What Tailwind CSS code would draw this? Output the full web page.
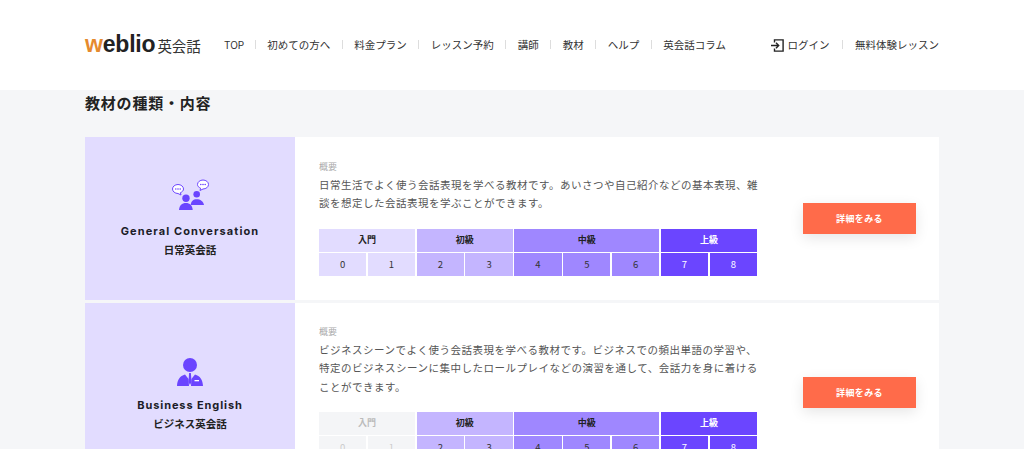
<!DOCTYPE html>
<html lang="ja">
<head>
    <meta charset="UTF-8">
    <meta name="viewport" content="width=device-width, initial-scale=1.0">
    <title>教材の種類・内容 | Weblio英会話</title>
    <script src="https://cdn.jsdelivr.net/npm/@tailwindcss/browser@4"></script>
</head>
<body class="bg-[#f5f6f8] h-[449px] overflow-hidden font-['Noto_Sans_CJK_JP','Noto_Sans',sans-serif] text-[#222]">

<!-- ヘッダー -->
<header class="bg-white h-[90px] px-[85px] flex items-center justify-between">
    <div class="flex items-center">
        <a class="flex items-baseline w-[139px] -mt-[2px]">
            <span class="font-['Liberation_Sans',sans-serif] font-bold text-[23px] leading-none tracking-[-0.2px] text-[#222]"><span class="text-[#e58a2e]">w</span>eblio</span>
            <span class="ml-[2px] text-[14.5px] leading-none text-[#333]">英会話</span>
        </a>
        <nav class="flex items-center text-[10.5px] text-[#333] -mt-[1px]">
            <a class="pr-[10.5px] font-['Inter',sans-serif] text-[10px] leading-[9px] pt-[1px]">TOP</a>
            <a class="px-[11.5px] border-l border-[#ddd] leading-[9px]">初めての方へ</a>
            <a class="px-[11.5px] border-l border-[#ddd] leading-[9px]">料金プラン</a>
            <a class="px-[11.5px] border-l border-[#ddd] leading-[9px]">レッスン予約</a>
            <a class="px-[11.5px] border-l border-[#ddd] leading-[9px]">講師</a>
            <a class="px-[11.5px] border-l border-[#ddd] leading-[9px]">教材</a>
            <a class="px-[11.5px] border-l border-[#ddd] leading-[9px]">ヘルプ</a>
            <a class="pl-[11.5px] border-l border-[#ddd] leading-[9px]">英会話コラム</a>
        </nav>
    </div>
    <div class="flex items-center text-[10.5px] text-[#333]">
        <svg class="w-[13px] h-[13px] mr-[4px]" viewBox="0 0 13 13" fill="none" stroke="#222" stroke-width="1.4">
            <path d="M3.5 3.5V.9h8.6v11.2H3.5V9.5"/>
            <path d="M0 6.5h7.5M5 3.8l2.7 2.7L5 9.2"/>
        </svg>
        <a class="pr-[12px]">ログイン</a>
        <a class="pl-[12.5px] border-l border-[#ddd] leading-[9px] -mt-[1px]">無料体験レッスン</a>
    </div>
</header>

<main class="px-[85px]">
    <h2 class="text-[15px] font-bold leading-[20px] mt-[3px] mb-[24px] tracking-[0.8px]">教材の種類・内容</h2>

    <!-- 日常英会話 -->
    <section class="flex bg-white h-[163px] mb-[3px]">
        <div class="w-[210px] shrink-0 bg-[#e2dcff] flex flex-col items-center pt-[42px]">
            <svg class="w-[38px] h-[32px]" viewBox="0 0 38 32" fill="#6b45ff">
                <path d="M7 5.500c-3 0-5.500 2-5.500 4.500s2.500 4.500 5.500 4.500l3 1.500-.6-2.300c1.900-.8 3.100-2.100 3.100-3.700 0-2.500-2.500-4.500-5.500-4.500z" fill="#fff" stroke="#6b45ff" stroke-width="1"/>
                <path d="M32 1c-3 0-5.500 2-5.500 4.500 0 1.600 1.200 2.900 3.100 3.700L29 11.500l3-1.500c3 0 5.500-2 5.500-4.500S35 1 32 1z" fill="#fff" stroke="#6b45ff" stroke-width="1"/>
                <circle cx="4.800" cy="10" r=".8"/><circle cx="7" cy="10" r=".8"/><circle cx="9.200" cy="10" r=".8"/>
                <circle cx="29.800" cy="5.500" r=".8"/><circle cx="32" cy="5.500" r=".8"/><circle cx="34.200" cy="5.500" r=".8"/>
                <circle cx="25.700" cy="15.300" r="3.300"/>
                <path d="M19.700 26c.3-3.800 2.600-5.800 6-5.800s6.700 2 7.300 5.800z"/>
                <circle cx="15" cy="19.300" r="3.700"/>
                <path d="M8 31c.3-4.500 3-7 6.900-7s6.500 2.500 6.800 7z"/>
            </svg>
            <p class="mt-[13px] font-['Inter',sans-serif] font-bold text-[11px] leading-[14px] tracking-[1.1px] text-[#1c1c28]">General Conversation</p>
            <p class="mt-[5px] text-[10.5px] font-bold leading-[14px]">日常英会話</p>
        </div>
        <div class="w-[462px] pl-[24px] pt-[24px]">
            <p class="text-[9px] leading-[12px] text-[#aaa]">概要</p>
            <p class="text-[10.5px] leading-[18px] tracking-[0.5px] text-[#555] mt-[3px] w-[440px]">日常生活でよく使う会話表現を学べる教材です。あいさつや自己紹介などの基本表現、雑談を想定した会話表現を学ぶことができます。</p>
            <div class="grid grid-cols-9 gap-[1.5px] w-[438px] mt-[17px] text-[9.5px] text-center leading-[22.500px] text-[#333]">
                <div class="col-span-2 bg-[#e2dcff] font-bold text-[9px] text-[#222]">入門</div>
                <div class="col-span-2 bg-[#c4b5ff] font-bold text-[9px] text-[#222]">初級</div>
                <div class="col-span-3 bg-[#9f87ff] font-bold text-[9px] text-[#222]">中級</div>
                <div class="col-span-2 bg-[#6b45ff] font-bold text-[9px] text-white">上級</div>
                <div class="bg-[#e2dcff]">0</div>
                <div class="bg-[#e2dcff]">1</div>
                <div class="bg-[#c4b5ff]">2</div>
                <div class="bg-[#c4b5ff]">3</div>
                <div class="bg-[#9f87ff]">4</div>
                <div class="bg-[#9f87ff]">5</div>
                <div class="bg-[#9f87ff]">6</div>
                <div class="bg-[#6b45ff] text-white">7</div>
                <div class="bg-[#6b45ff] text-white">8</div>
            </div>
        </div>
        <div class="flex-1 flex items-start pt-[66px] pl-[46px]">
            <a class="block w-[113px] h-[31px] bg-[#ff6b4a] text-white text-[9px] tracking-[0.4px] font-bold leading-[31px] text-center shadow-[0_4px_14px_rgba(0,0,0,0.1)]">詳細をみる</a>
        </div>
    </section>

    <!-- ビジネス英会話 -->
    <section class="flex bg-white h-[200px]">
        <div class="w-[210px] shrink-0 bg-[#e2dcff] flex flex-col items-center pt-[55px]">
            <svg class="w-[28px] h-[28px]" viewBox="0 0 28 28" fill="#6b45ff">
                <circle cx="14" cy="7" r="7"/>
                <path d="M1 28c.3-6.500 3-10 8-11.500l3.600 4.500.4 7zM27 28c-.3-6.500-3-10-8-11.500L15.400 21l-.4 7z"/>
                <path d="M13.100 15h1.800l.6 9-1.500 3-1.500-3z"/>
                <rect x="18.500" y="22" width="4.500" height="1.300" fill="#fff"/>
            </svg>
            <p class="mt-[12px] font-['Inter',sans-serif] font-bold text-[11px] leading-[14px] tracking-[0.9px] text-[#1c1c28]">Business English</p>
            <p class="mt-[5px] text-[10.5px] font-bold leading-[14px]">ビジネス英会話</p>
        </div>
        <div class="w-[462px] pl-[24px] pt-[23px]">
            <p class="text-[9px] leading-[12px] text-[#aaa]">概要</p>
            <p class="text-[10.5px] leading-[18.4px] tracking-[0.5px] text-[#555] mt-[3px] w-[440px]">ビジネスシーンでよく使う会話表現を学べる教材です。ビジネスでの頻出単語の学習や、特定のビジネスシーンに集中したロールプレイなどの演習を通して、会話力を身に着けることができます。</p>
            <div class="grid grid-cols-9 gap-[1.5px] w-[438px] mt-[16px] text-[9.5px] text-center leading-[22.500px] text-[#333]">
                <div class="col-span-2 bg-[#f4f5f7] font-bold text-[9px] text-[#bbb]">入門</div>
                <div class="col-span-2 bg-[#c4b5ff] font-bold text-[9px] text-[#222]">初級</div>
                <div class="col-span-3 bg-[#9f87ff] font-bold text-[9px] text-[#222]">中級</div>
                <div class="col-span-2 bg-[#6b45ff] font-bold text-[9px] text-white">上級</div>
                <div class="bg-[#f4f5f7] text-[#ccc]">0</div>
                <div class="bg-[#f4f5f7] text-[#ccc]">1</div>
                <div class="bg-[#c4b5ff]">2</div>
                <div class="bg-[#c4b5ff]">3</div>
                <div class="bg-[#9f87ff]">4</div>
                <div class="bg-[#9f87ff]">5</div>
                <div class="bg-[#9f87ff]">6</div>
                <div class="bg-[#6b45ff] text-white">7</div>
                <div class="bg-[#6b45ff] text-white">8</div>
            </div>
        </div>
        <div class="flex-1 flex items-start pt-[74px] pl-[46px]">
            <a class="block w-[113px] h-[31px] bg-[#ff6b4a] text-white text-[9px] tracking-[0.4px] font-bold leading-[31px] text-center shadow-[0_4px_14px_rgba(0,0,0,0.1)]">詳細をみる</a>
        </div>
    </section>
</main>

</body>
</html>
